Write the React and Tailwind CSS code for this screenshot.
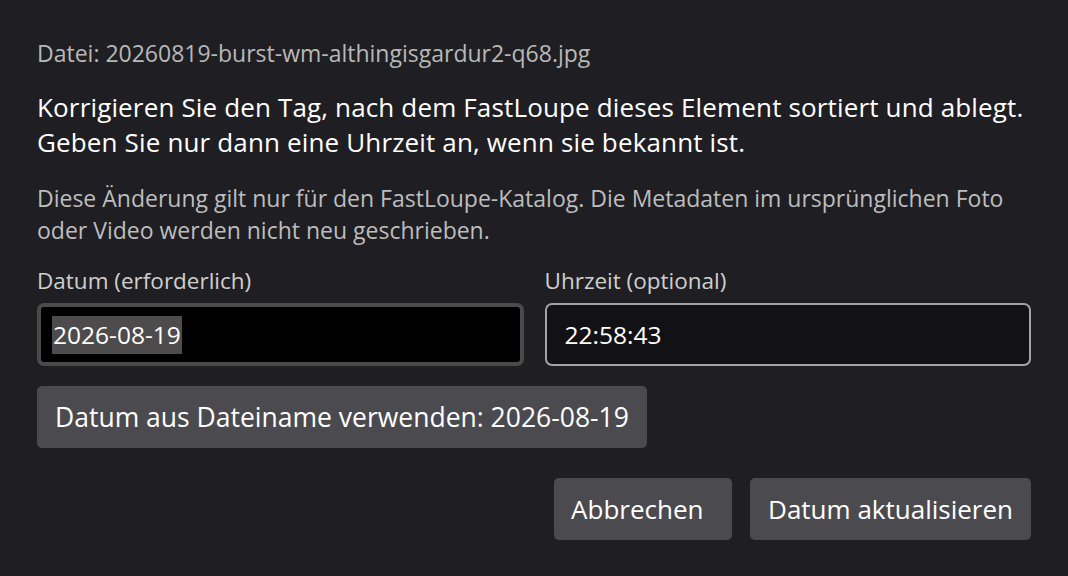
import { useState } from 'react';

export default function App() {
  const [date, setDate] = useState('2026-08-19');
  const [time, setTime] = useState('22:58:43');

  const font = { fontFamily: '"Open Sans", "Noto Sans", sans-serif' };
  const btn = 'rounded-[5px] bg-[#4b4b4f] text-white leading-none h-[62px] flex items-center';

  return (
    <div className="w-full h-[576px] bg-[#1f1f23] px-[37px] pt-[38px] flex flex-col" style={font}>
      <p className="text-[23px] leading-[30px] text-[#b8b8b8]">Datei: 20260819-burst-wm-althingisgardur2-q68.jpg</p>

      <p className="mt-[22px] text-[26px] leading-[35px] text-white tracking-[0.15px] whitespace-nowrap">
        Korrigieren Sie den Tag, nach dem FastLoupe dieses Element sortiert und ablegt.<br />
        Geben Sie nur dann eine Uhrzeit an, wenn sie bekannt ist.
      </p>

      <p className="mt-[22px] text-[23px] leading-[32px] text-[#bdbdbd] whitespace-nowrap">
        Diese Änderung gilt nur für den FastLoupe-Katalog. Die Metadaten im ursprünglichen Foto<br />
        oder Video werden nicht neu geschrieben.
      </p>

      <div className="mt-[20px] grid grid-cols-2 gap-[21px]">
        <div className="flex flex-col">
          <label className="text-[22.5px] leading-[30px] text-[#cfcfcf]">Datum (erforderlich)</label>
          <div className="mt-[7px] h-[63px] rounded-[7px] border-[4px] border-[#4a4a4a] bg-black flex items-center px-[11px]">
            <span className="bg-[#4d4b4b] text-white text-[24.5px] leading-[38px] px-[1px]">{date}</span>
          </div>
        </div>
        <div className="flex flex-col">
          <label className="text-[22.5px] leading-[30px] text-[#cfcfcf]">Uhrzeit (optional)</label>
          <input
            value={time}
            onChange={e => setTime(e.target.value)}
            className="mt-[7px] h-[63px] rounded-[7px] border-2 border-[#a3a3a3] bg-[#121214] text-white text-[24.5px] px-[18px] outline-none"
          />
        </div>
      </div>

      <div className="mt-[20px] flex">
        <button onClick={() => setDate('2026-08-19')} className={`${btn} text-[26.5px] px-[18px]`}>Datum aus Dateiname verwenden: 2026-08-19</button>
      </div>

      <div className="mt-[30px] flex justify-end gap-[18px]">
        <button className={`${btn} text-[26px] w-[178px] pl-[17px]`}>Abbrechen</button>
        <button className={`${btn} text-[26px] px-[18px]`}>Datum aktualisieren</button>
      </div>
    </div>
  );
}
